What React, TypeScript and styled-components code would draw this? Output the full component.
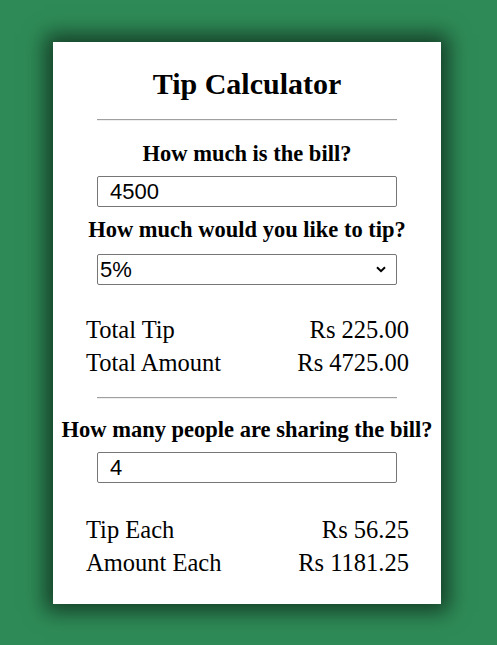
import React from "react";
import styled, { createGlobalStyle } from "styled-components";

const Global = createGlobalStyle`
  html, body { margin: 0; padding: 0; background: #2e8b57; }
  body { font-family: "Liberation Serif", "Times New Roman", serif; color: #000; }
`;

const Page = styled.div`
  width: 497px;
  height: 645px;
  background: #2e8b57;
  display: flex;
  justify-content: center;
  padding-top: 42px;
  box-sizing: border-box;
`;

const Card = styled.div`
  width: 388px;
  height: 562px;
  margin-left: -3px;
  background: #fff;
  box-shadow: 0 0 20px 8px rgba(0, 0, 0, 0.55);
  display: flex;
  flex-direction: column;
  align-items: center;
  box-sizing: border-box;
  padding: 26px 32px 0 32px;
`;

const Title = styled.h1`
  margin: 0;
  font-size: 30px;
  font-weight: bold;
  line-height: 32px;
`;

const Rule = styled.hr<{ $top: number }>`
  width: 300px;
  margin: ${(p) => p.$top}px 0 0;
  border: none;
  border-top: 1px solid #a0a0a0;
  border-bottom: 1px solid #eeeeee;
  height: 0;
`;

const Label = styled.div<{ $top: number }>`
  margin-top: ${(p) => p.$top}px;
  font-size: 22.5px;
  font-weight: bold;
  line-height: 24px;
  white-space: nowrap;
`;

const Input = styled.input`
  margin-top: 10px;
  width: 300px;
  height: 31px;
  box-sizing: border-box;
  border: 1px solid #767676;
  border-radius: 2px;
  padding: 0 12px;
  font-family: "Liberation Sans", Arial, sans-serif;
  font-size: 22px;
  color: #000;
  background: #fff;
  outline: none;
`;

const SelectWrap = styled.div`
  position: relative;
  margin-top: 12px;
  width: 300px;
  height: 31px;
`;

const Select = styled.select`
  appearance: none;
  width: 100%;
  height: 100%;
  box-sizing: border-box;
  border: 1px solid #767676;
  border-radius: 2px;
  padding: 0 2px;
  font-family: "Liberation Sans", Arial, sans-serif;
  font-size: 22px;
  color: #000;
  background: #fff;
`;

const Chevron = styled.svg`
  position: absolute;
  right: 11px;
  top: 12px;
  pointer-events: none;
`;

const Results = styled.div<{ $top: number }>`
  margin-top: ${(p) => p.$top}px;
  align-self: stretch;
  padding-left: 1px;
  display: flex;
  flex-direction: column;
`;

const Row = styled.div`
  display: flex;
  justify-content: space-between;
  font-size: 24.5px;
  line-height: 32.5px;
`;

export default function App() {
  return (
    <>
      <Global />
      <Page>
        <Card>
          <Title>Tip Calculator</Title>
          <Rule $top={19} />
          <Label $top={21}>How much is the bill?</Label>
          <Input defaultValue="4500" />
          <Label $top={11}>How much would you like to tip?</Label>
          <SelectWrap>
            <Select defaultValue="5">
              <option value="5">5%</option>
              <option value="10">10%</option>
              <option value="15">15%</option>
              <option value="20">20%</option>
            </Select>
            <Chevron width="10" height="7" viewBox="0 0 10 7">
              <path d="M1 1.2 L5 5.2 L9 1.2" stroke="#000" strokeWidth="2" fill="none" />
            </Chevron>
          </SelectWrap>
          <Results $top={29}>
            <Row><span>Total Tip</span><span>Rs 225.00</span></Row>
            <Row><span>Total Amount</span><span>Rs 4725.00</span></Row>
          </Results>
          <Rule $top={18} />
          <Label $top={19}>How many people are sharing the bill?</Label>
          <Input defaultValue="4" />
          <Results $top={31}>
            <Row><span>Tip Each</span><span>Rs 56.25</span></Row>
            <Row><span>Amount Each</span><span>Rs 1181.25</span></Row>
          </Results>
        </Card>
      </Page>
    </>
  );
}
